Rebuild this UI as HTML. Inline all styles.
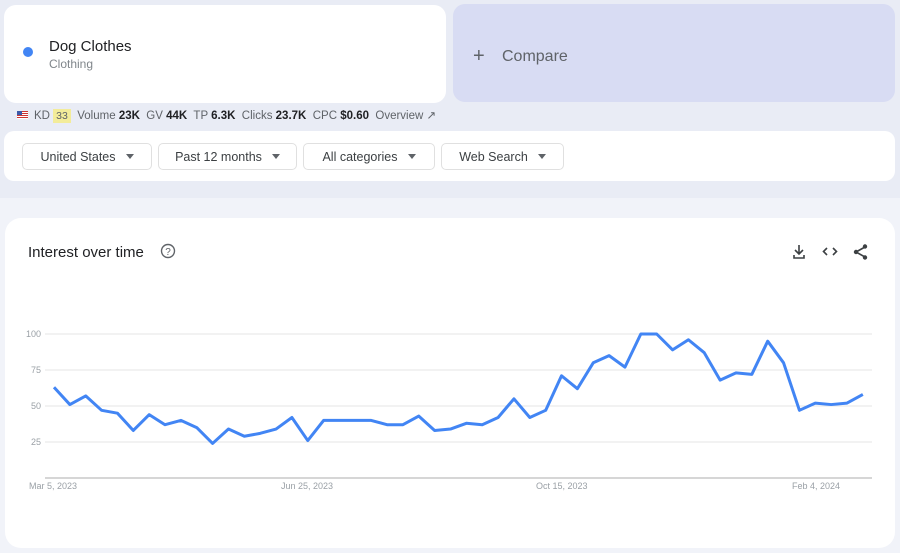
<!DOCTYPE html>
<html><head><meta charset="utf-8"><style>
*{margin:0;padding:0;box-sizing:border-box}
body{width:900px;height:553px;overflow:hidden;font-family:"Liberation Sans",Arial,sans-serif;background:#f1f3f9;position:relative}
.top{position:absolute;left:0;top:0;width:900px;height:198px;background:#e9ecf5}
.card1{position:absolute;left:4px;top:5px;width:442px;height:98px;background:#fff;border-radius:12px}
.dot{position:absolute;left:19px;top:42px;width:10px;height:10px;border-radius:50%;background:#4285f4}
.t1{position:absolute;left:45px;top:33px;font-size:15px;color:#202124}
.t2{position:absolute;left:45px;top:52px;font-size:12px;color:#80868b}
.cmp{position:absolute;left:453px;top:4px;width:442px;height:98px;background:#d8dcf3;border-radius:12px;color:#5f6368;font-size:16px}
.cmp span{position:absolute;top:44px}
.met{position:absolute;left:17px;top:108px;font-size:11.5px;color:#5f6368;white-space:nowrap}
.met b{color:#202124}
.kd{background:#f3ec9a;padding:1px 3px;font-size:10.5px;color:#5f6368}
.flag{display:inline-block;width:11px;height:8px;background:repeating-linear-gradient(#c33 0 1px,#fff 1px 2px);position:relative;vertical-align:0;margin-right:6px}
.flag:before{content:"";position:absolute;left:0;top:0;width:5px;height:4px;background:#3c5aa8}
.bar{position:absolute;left:4px;top:131px;width:891px;height:50px;background:#fff;border-radius:10px}
.btn{position:absolute;top:12px;height:27px;border:1px solid #e0e0e0;border-radius:5px;font-size:12.5px;color:#3c4043;display:flex;align-items:center;justify-content:center}
.btn:after{content:"";border-left:4px solid transparent;border-right:4px solid transparent;border-top:5px solid #5f6368;margin-left:10px}
.chart{position:absolute;left:5px;top:218px;width:890px;height:330px;background:#fff;border-radius:16px}
.title{position:absolute;left:28px;top:244px;font-size:15px;color:#202124}
</style></head><body>
<div class="top"></div>
<div class="card1"><div class="dot"></div><div class="t1">Dog Clothes</div><div class="t2">Clothing</div></div>
<div class="cmp"><span style="left:20px;top:41px;font-size:20px;font-weight:300">+</span><span style="left:49px">Compare</span></div>
<div class="met"><span class="flag"></span>KD <span class="kd">33</span>&nbsp; Volume <b>23K</b>&nbsp; GV <b>44K</b>&nbsp; TP <b>6.3K</b>&nbsp; Clicks <b>23.7K</b>&nbsp; CPC <b>$0.60</b>&nbsp; Overview ↗</div>
<div class="bar">
<div class="btn" style="left:18px;width:130px">United States</div>
<div class="btn" style="left:154px;width:139px">Past 12 months</div>
<div class="btn" style="left:299px;width:132px">All categories</div>
<div class="btn" style="left:437px;width:123px">Web Search</div>
</div>
<div class="chart"></div>
<div class="title">Interest over time</div>
<svg style="position:absolute;left:0;top:0" width="900" height="553">
<circle cx="168" cy="251" r="6.5" fill="none" stroke="#5f6368" stroke-width="1.4"/>
<text x="168" y="255" font-size="10" text-anchor="middle" fill="#5f6368" font-family="Liberation Sans">?</text>
<g fill="none" stroke="#3c4043" stroke-width="1.6">
<path d="M799 245v9M795 250l4 4 4-4M794 255v3h10v-3"/>
<path d="M827 248l-3.5 3.5 3.5 3.5M833 248l3.5 3.5-3.5 3.5"/>
<path d="M856 252l9-5M856 252l9 5"/>
</g>
<g fill="#3c4043"><circle cx="856" cy="252" r="2.2"/><circle cx="865" cy="246.5" r="2.2"/><circle cx="865" cy="257.5" r="2.2"/></g>
<g stroke="#e6e6e6" stroke-width="1"><line x1="45" y1="334" x2="872" y2="334"/><line x1="45" y1="370" x2="872" y2="370"/><line x1="45" y1="406" x2="872" y2="406"/><line x1="45" y1="442" x2="872" y2="442"/></g>
<line x1="45" y1="478" x2="872" y2="478" stroke="#c8c8c8" stroke-width="1.5"/>
<g font-family="Liberation Sans" font-size="9" fill="#9aa0a6" text-anchor="end">
<text x="41" y="337">100</text><text x="41" y="373">75</text><text x="41" y="409">50</text><text x="41" y="445">25</text></g>
<g font-family="Liberation Sans" font-size="9" fill="#9aa0a6">
<text x="29" y="489">Mar 5, 2023</text><text x="281" y="489">Jun 25, 2023</text><text x="536" y="489">Oct 15, 2023</text><text x="792" y="489">Feb 4, 2024</text></g>
<g transform="translate(54,478) scale(15.86,-1.44)">
<polyline vector-effect="non-scaling-stroke" fill="none" stroke="#4285f4" stroke-width="3" stroke-linejoin="round" points="0,63 1,51 2,57 3,47 4,45 5,33 6,44 7,37 8,40 9,35 10,24 11,34 12,29 13,31 14,34 15,42 16,26 17,40 18,40 19,40 20,40 21,37 22,37 23,43 24,33 25,34 26,38 27,37 28,42 29,55 30,42 31,47 32,71 33,62 34,80 35,85 36,77 37,100 38,100 39,89 40,96 41,87 42,68 43,73 44,72 45,95 46,80 47,47 48,52 49,51 50,52 51,58"/>
</g>
</svg>
</body></html>
